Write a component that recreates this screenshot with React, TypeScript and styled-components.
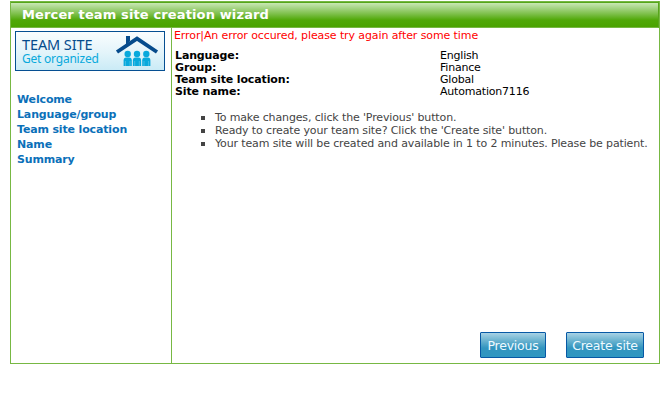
import React from 'react';
import styled, { createGlobalStyle } from 'styled-components';

const GlobalStyle = createGlobalStyle`
  * { box-sizing: border-box; }
  body {
    margin: 0;
    background: #fff;
    font-family: Verdana, "DejaVu Sans", sans-serif;
    font-size: 11px;
  }
`;

const Wizard = styled.main`
  display: flex;
  flex-direction: column;
  width: 650px;
  height: 363px;
  margin: 1px 0 0 10px;
  border: 1px solid #77b843;
  border-top: 0;
`;

const TitleBar = styled.header`
  height: 27px;
  flex: none;
  padding: 5px 0 0 11px;
  border-top: 1px solid #77b843;
  border-bottom: 1px solid #77b843;
  border-right: 1px solid #58a51c;
  background: linear-gradient(#55a51a 0 1px, #c9e8b4 1px, #a6d485 6px, #7cbf49 12px, #50a808 18px, #4aa300 25px);
`;

const Title = styled.h1`
  margin: 0;
  color: #fff;
  font-size: 13px;
  line-height: 16px;
  letter-spacing: 0.13px;
  white-space: nowrap;
`;

const Body = styled.div`
  display: flex;
  flex: 1;
  min-height: 0;
`;

const Sidebar = styled.aside`
  width: 161px;
  padding: 3px 0 0 4px;
  border-right: 1px solid #77b843;
`;

const Banner = styled.div`
  display: flex;
  justify-content: space-between;
  width: 150px;
  height: 40px;
  padding: 4px 5px 0 6px;
  border: 1px solid #064f92;
  background: linear-gradient(#fafdfe, #e3f4fa 55%, #caebf6);
  font-family: "Noto Sans", sans-serif;
  white-space: nowrap;
`;

const BannerName = styled.div`
  color: #064b8c;
  font-size: 14.5px;
  line-height: 17px;
  letter-spacing: -0.1px;
`;

const BannerTagline = styled.div`
  color: #08a9dc;
  font-size: 12px;
  line-height: 13px;
  letter-spacing: -0.22px;
  margin-top: -1px;
`;

const House = styled.svg`
  display: block;
  width: 44px;
  height: 32px;
  flex: none;
`;

const Steps = styled.ul`
  margin: 21px 0 0 2px;
  padding: 0;
  list-style: none;
`;

const Step = styled.li`
  color: #0b70b9;
  font-weight: bold;
  line-height: 15px;
  letter-spacing: -0.15px;
  white-space: nowrap;
`;

const Content = styled.section`
  display: flex;
  flex-direction: column;
  flex: 1;
  min-width: 0;
`;

const ErrorMessage = styled.p`
  margin: 1px 0 0 2px;
  color: #f00;
  line-height: 13px;
  letter-spacing: -0.1px;
  white-space: nowrap;
`;

const Summary = styled.dl`
  display: grid;
  grid-template-columns: 265px 1fr;
  margin: 8px 0 0 3px;
  line-height: 12px;
  color: #000;
`;

const Label = styled.dt`
  font-weight: bold;
  letter-spacing: -0.13px;
`;

const Value = styled.dd`
  margin: 0;
  letter-spacing: -0.2px;
`;

const Notes = styled.ul`
  margin: 13px 0 0;
  padding: 0 0 0 29px;
  list-style: none;
  color: #444;
  line-height: 13px;
  letter-spacing: -0.135px;
`;

const Note = styled.li`
  display: flex;
  align-items: center;
  gap: 10px;
  white-space: nowrap;

  &::before {
    content: "";
    width: 4px;
    height: 4px;
    flex: none;
    margin-top: 1px;
    background: #444;
  }
`;

const Actions = styled.footer`
  display: flex;
  justify-content: flex-end;
  gap: 20px;
  margin-top: auto;
  padding: 0 15px 5px 0;
`;

const Button = styled.button<{ $width: number }>`
  width: ${({ $width }) => $width}px;
  height: 26px;
  padding: 1px 0 0;
  border: 1px solid #0759a5;
  border-radius: 1px;
  background: linear-gradient(#a8d2e5, #6fb5d1 7px, #3295bf 15px, #2f97c1);
  color: #effaff;
  font: 12.5px Verdana, "DejaVu Sans", sans-serif;
  letter-spacing: -0.22px;
  white-space: nowrap;
`;

const steps = ['Welcome', 'Language/group', 'Team site location', 'Name', 'Summary'];

const details = [
  ['Language:', 'English'],
  ['Group:', 'Finance'],
  ['Team site location:', 'Global'],
  ['Site name:', 'Automation7116'],
];

const notes = [
  "To make changes, click the 'Previous' button.",
  "Ready to create your team site? Click the 'Create site' button.",
  'Your team site will be created and available in 1 to 2 minutes. Please be patient.',
];

function HouseIcon() {
  return (
    <House viewBox="0 0 44 32" aria-hidden="true">
      <path d="M11 0h4v5l-4 4z" fill="#064b8c" />
      <path d="M2 16 22 2.6 42 16" fill="none" stroke="#064b8c" strokeWidth="3.8" />
      {[12.7, 22, 31.3].map((x) => (
        <g key={x} fill="#08a9dc">
          <circle cx={x} cy="18" r="3.2" />
          <path d={`M${x - 4.1} 30v-5.5q0-3 2.6-3h3q2.6 0 2.6 3v5.5z`} />
          <path d={`M${x - 2.3} 25v5m4.6-5v5`} stroke="#9fdcf0" strokeWidth=".4" />
        </g>
      ))}
    </House>
  );
}

export default function App() {
  return (
    <>
      <GlobalStyle />
      <Wizard>
        <TitleBar>
          <Title>Mercer team site creation wizard</Title>
        </TitleBar>
        <Body>
          <Sidebar>
            <Banner>
              <div>
                <BannerName>TEAM SITE</BannerName>
                <BannerTagline>Get organized</BannerTagline>
              </div>
              <HouseIcon />
            </Banner>
            <Steps>
              {steps.map((step) => (
                <Step key={step}>{step}</Step>
              ))}
            </Steps>
          </Sidebar>
          <Content>
            <ErrorMessage>Error|An error occured, please try again after some time</ErrorMessage>
            <Summary>
              {details.map(([label, value]) => (
                <React.Fragment key={label}>
                  <Label>{label}</Label>
                  <Value>{value}</Value>
                </React.Fragment>
              ))}
            </Summary>
            <Notes>
              {notes.map((note) => (
                <Note key={note}>{note}</Note>
              ))}
            </Notes>
            <Actions>
              <Button type="button" $width={66}>Previous</Button>
              <Button type="button" $width={78}>Create site</Button>
            </Actions>
          </Content>
        </Body>
      </Wizard>
    </>
  );
}
